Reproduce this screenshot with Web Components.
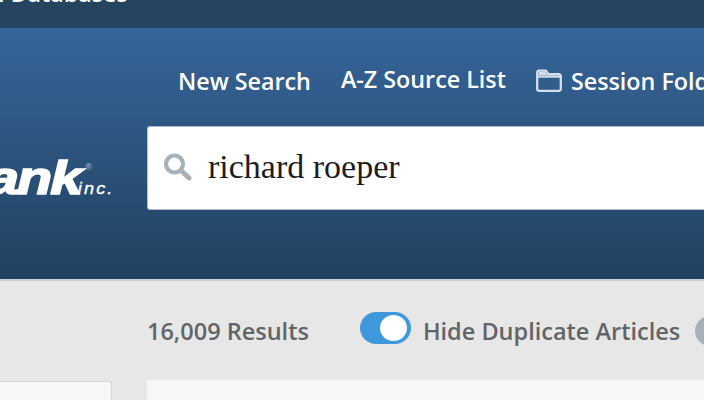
<!DOCTYPE html>
<html><head><meta charset="utf-8"><style>
html,body{margin:0;padding:0;height:400px;overflow:hidden;background:#e7e7e7;font-family:"Open Sans",sans-serif}
</style></head><body>
<nb-page></nb-page>
<script>
function def(name,html){customElements.define(name,class extends HTMLElement{constructor(){super();this.attachShadow({mode:'open'}).innerHTML=html}})}
def('nb-topbar',`<style>:host{display:block;height:28px;overflow:hidden;background:#24445f;box-sizing:border-box}
div{margin:-20px 0 0 -24px;font:600 23.3px/26px "Open Sans",sans-serif;color:#fff;white-space:nowrap}</style><div>All Databases</div>`);
def('nb-nav',`<style>:host{display:flex;align-items:center;height:48px;margin-top:29px;padding-left:178px;color:#fff;font:600 23.3px/30px "Open Sans",sans-serif;white-space:nowrap;overflow:hidden}
span{display:block}.az{margin:0 30px 0 30px;position:relative;top:-2px}.f{display:flex;align-items:center;gap:9px}svg{display:block;flex:none}</style>
<span>New Search</span><span class="az">A-Z Source List</span>
<span class="f"><svg width="26" height="23" viewBox="0 0 26 23" style="margin-top:-2px"><path d="M1.2 3.5V20a1.8 1.8 0 0 0 1.8 1.8h20a1.8 1.8 0 0 0 1.8-1.8V7A1.8 1.8 0 0 0 23 5.2H12.5L9.8 1.6H3A1.8 1.8 0 0 0 1.2 3.5z" fill="none" stroke="#d5dfeb" stroke-width="2.3"/><path d="M2 7.5H24.5" stroke="#d5dfeb" stroke-width="2.4"/><path d="M2.5 2.8H9L11.6 6H2.5z" fill="#d5dfeb"/></svg>Session Folder</span>`);
def('nb-logo',`<style>:host{display:flex;justify-content:flex-end;width:114px;flex:none;overflow:hidden;height:60px;align-items:flex-start;position:relative;color:#fff;white-space:nowrap}
b{font:italic 900 46px/60px "Liberation Sans",sans-serif;letter-spacing:-1.5px;transform:scaleX(1.25);transform-origin:right;margin-right:34px;-webkit-text-stroke:1.6px #fff;margin-top:10px}
i{position:absolute;right:0;top:43px;font:italic 400 16px/16px "Liberation Sans",sans-serif;letter-spacing:1.9px;transform:scaleX(1.13);transform-origin:right;-webkit-text-stroke:.3px #fff}
sup{position:absolute;right:22px;top:25px;font:9px/9px "Liberation Sans",sans-serif;color:#b9c6d3}</style><b>newsbank</b><sup>®</sup><i>inc.</i>`);
def('nb-search',`<style>:host{display:flex;align-items:center;flex:none;width:640px;height:84px;box-sizing:border-box;margin-left:33px;background:#fff;border:1px solid #a9bfd2;border-right:0;border-radius:3px;padding-left:15px;gap:16px}
svg{display:block;flex:none}span{font:400 34px/40px "Liberation Serif",serif;color:#1c1c1c;margin-top:-2px}</style>
<svg width="29" height="28" viewBox="0 0 29 28" style="margin-top:-2px"><circle cx="11.5" cy="11" r="8.5" fill="none" stroke="#a6b1b9" stroke-width="4.2"/><path d="M18 17.5 26 25" stroke="#a6b1b9" stroke-width="5" stroke-linecap="round"/></svg><span>richard roeper</span>`);
def('nb-header',`<style>:host{display:block;height:253px;box-sizing:border-box;overflow:hidden;background:linear-gradient(#36659a,#21415f 251px);border-bottom:2px solid;border-image:linear-gradient(#0e2c44 50%,#c7ced4 50%) 1}
.row{display:flex;align-items:center;margin-top:21px}</style><nb-nav></nb-nav><div class="row"><nb-logo></nb-logo><nb-search></nb-search></div>`);
def('nb-toggle',`<style>:host{display:block;flex:none;width:51px;height:32px;box-sizing:border-box;background:#3f98dc;border-radius:16px;padding:3px 3px 3px 20px}
i{display:block;width:27px;height:26px;background:#fff;border-radius:50%}</style><i></i>`);
def('nb-bar',`<style>:host{display:flex;align-items:center;height:99px;padding-left:147px;color:#626568;font:600 23.5px/30px "Open Sans",sans-serif;white-space:nowrap;overflow:hidden}
.sep{width:1px;height:24px;background:#a8a8a8;margin:0 29px 0 22px}.t{margin-left:12px}.d{flex:none;width:30px;height:30px;border-radius:50%;background:#a6b1b9;margin-left:15px}</style>
<span>16,009 Results</span><div class="sep"></div><nb-toggle style="margin-top:-6px"></nb-toggle><span class="t">Hide Duplicate Articles</span><div class="d"></div>`);
def('nb-content',`<style>:host{display:flex;height:20px;overflow:hidden}
.a{width:112px;height:20px;box-sizing:border-box;background:#f7f7f7;border:1px solid #d5d5d5;border-left:0;border-bottom:0;border-radius:0 3px 0 0;margin-top:1px}
.b{flex:1;margin-left:35px;background:#f7f7f7}</style><div class="a"></div><div class="b"></div>`);
def('nb-page',`<style>:host{display:block;width:704px;height:400px;overflow:hidden;background:#e7e7e7}</style><nb-topbar></nb-topbar><nb-header></nb-header><nb-bar></nb-bar><nb-content></nb-content>`);
</script></body></html>
